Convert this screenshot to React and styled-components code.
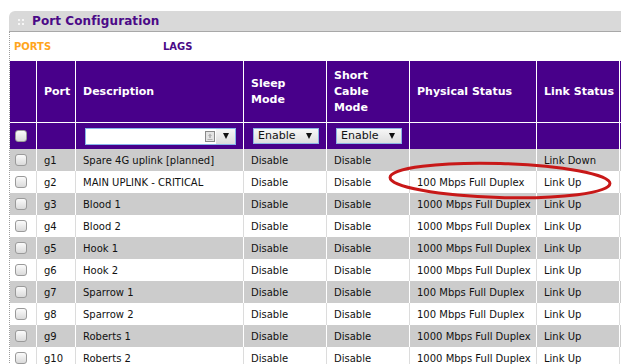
import React from 'react';
import styled, { createGlobalStyle } from 'styled-components';

const Global = createGlobalStyle`
  html, body { margin: 0; padding: 0; background: #fff; overflow: hidden; }
  body { font-family: "DejaVu Sans", Verdana, sans-serif; }
`;

const COLS = '26px 39px 168px 83px 83px 127px 83px 1fr';
const PURPLE = '#48008a';

const Page = styled.div`
  position: relative;
  box-sizing: border-box;
  width: 621px;
  height: 364px;
  overflow: hidden;
  padding: 11px 0 0 9px;
`;

const Panel = styled.section`
  width: 700px;
`;

const TitleBar = styled.header`
  display: flex;
  align-items: center;
  height: 20px;
  padding-left: 9px;
  background: #d9d9d9;
  border-bottom: 1px solid #a8a8a8;
  border-top-left-radius: 6px;
`;

const Grip = styled.span`
  display: grid;
  grid-template-columns: 2px 2px;
  grid-auto-rows: 2px;
  gap: 2px;
  margin: 2px 8px 0 0;
  span { background: #f6f6f6; }
`;

const Title = styled.h2`
  margin: 0;
  font-size: 12px;
  font-weight: bold;
  color: #4b0a87;
  letter-spacing: 0.1px;
`;

const Body = styled.div`
  border-left: 1px dotted #9c9c9c;
`;

const Tabs = styled.nav`
  display: grid;
  grid-template-columns: 149px 149px;
  align-items: center;
  height: 29px;
`;

const Tab = styled.span`
  padding-left: 4px;
  font-size: 10px;
  font-weight: bold;
  color: ${p => (p.$active ? '#ffa51c' : '#4b0a87')};
`;

const Grid = styled.div`
  width: 690px;
`;

const HeadRow = styled.div`
  display: grid;
  grid-template-columns: ${COLS};
  height: ${p => p.$h}px;
  background: ${PURPLE};
  border-bottom: ${p => (p.$line ? '1px solid #fff' : 'none')};
`;

const HeadCell = styled.div`
  display: flex;
  align-items: center;
  padding-left: ${p => p.$pad ?? 7}px;
  border-left: ${p => (p.$first ? 'none' : '1px solid #fff')};
  color: #fff;
  font-size: 11px;
  font-weight: bold;
  line-height: 16px;
`;

const Row = styled.div`
  display: grid;
  grid-template-columns: ${COLS};
  height: 22px;
  background: ${p => (p.$alt ? '#cccccc' : '#ffffff')};
`;

const Cell = styled.div`
  display: flex;
  align-items: center;
  padding-left: ${p => p.$pad ?? 7}px;
  border-left: ${p => (p.$first ? 'none' : p.$alt ? '1px solid #ffffff' : '1px solid #dcdcdc')};
  font-size: 10px;
  color: #111;
  white-space: nowrap;
  overflow: hidden;
`;

const Check = styled.span`
  display: block;
  width: 10px;
  height: 10px;
  border: 1px solid #9a9a9a;
  border-radius: 3px;
  background: linear-gradient(#fbfbfb, #dadada);
`;

const Combo = styled.div`
  display: flex;
  width: 151px;
  height: 17px;
  box-sizing: border-box;
  border: 1px solid #86b6ea;
  background: #fff;
`;

const ComboField = styled.span`
  flex: 1;
  display: flex;
  align-items: center;
  justify-content: flex-end;
  padding-right: 1px;
`;

const ComboButton = styled.span`
  display: flex;
  align-items: center;
  justify-content: center;
  width: 19px;
  background: linear-gradient(#f6f6f6, #dcdcdc);
`;

const Arrow = styled.span`
  display: block;
  width: 0;
  height: 0;
  border-left: 3px solid transparent;
  border-right: 3px solid transparent;
  border-top: 6px solid #111;
`;

const SelectBox = styled.div`
  display: flex;
  align-items: center;
  justify-content: space-between;
  width: 66px;
  height: 16px;
  box-sizing: border-box;
  padding: 0 6px 0 4px;
  border: 1px solid #8cb6e4;
  background: linear-gradient(#f7f7f7, #dedede);
  font-size: 11px;
  font-weight: normal;
  color: #111;
`;

const Overlay = styled.svg`
  position: absolute;
  left: 0;
  top: 0;
  width: 621px;
  height: 364px;
  pointer-events: none;
`;

const rows = [
  ['g1', 'Spare 4G uplink [planned]', '', 'Link Down'],
  ['g2', 'MAIN UPLINK - CRITICAL', '100 Mbps Full Duplex', 'Link Up'],
  ['g3', 'Blood 1', '1000 Mbps Full Duplex', 'Link Up'],
  ['g4', 'Blood 2', '1000 Mbps Full Duplex', 'Link Up'],
  ['g5', 'Hook 1', '1000 Mbps Full Duplex', 'Link Up'],
  ['g6', 'Hook 2', '1000 Mbps Full Duplex', 'Link Up'],
  ['g7', 'Sparrow 1', '100 Mbps Full Duplex', 'Link Up'],
  ['g8', 'Sparrow 2', '100 Mbps Full Duplex', 'Link Up'],
  ['g9', 'Roberts 1', '1000 Mbps Full Duplex', 'Link Up'],
  ['g10', 'Roberts 2', '1000 Mbps Full Duplex', 'Link Up'],
];

function Select() {
  return (
    <SelectBox>
      <span>Enable</span>
      <Arrow />
    </SelectBox>
  );
}

export default function App() {
  return (
    <>
      <Global />
      <Page>
        <Panel>
          <TitleBar>
            <Grip><span /><span /><span /><span /></Grip>
            <Title>Port Configuration</Title>
          </TitleBar>
          <Body>
            <Tabs>
              <Tab $active>PORTS</Tab>
              <Tab>LAGS</Tab>
            </Tabs>
            <Grid>
              <HeadRow $h={61} $line>
                <HeadCell $first />
                <HeadCell>Port</HeadCell>
                <HeadCell>Description</HeadCell>
                <HeadCell>Sleep<br />Mode</HeadCell>
                <HeadCell>Short<br />Cable<br />Mode</HeadCell>
                <HeadCell>Physical Status</HeadCell>
                <HeadCell>Link Status</HeadCell>
                <HeadCell />
              </HeadRow>
              <HeadRow $h={26}>
                <HeadCell $first $pad={5}><Check /></HeadCell>
                <HeadCell />
                <HeadCell $pad={9}>
                  <Combo>
                    <ComboField>
                      <svg width="10" height="11" viewBox="0 0 10 11">
                        <rect x="0.5" y="0.5" width="9" height="10" fill="#e4e4e4" stroke="#8a8a8a" />
                        <path d="M5 2.5 L3 5 H4.2 V7 H5.8 V5 H7 Z" fill="#b0b0b0" />
                        <rect x="2.5" y="8" width="5" height="1" fill="#b0b0b0" />
                      </svg>
                    </ComboField>
                    <ComboButton><Arrow /></ComboButton>
                  </Combo>
                </HeadCell>
                <HeadCell $pad={9}><Select /></HeadCell>
                <HeadCell $pad={9}><Select /></HeadCell>
                <HeadCell />
                <HeadCell />
                <HeadCell />
              </HeadRow>
              {rows.map(([port, desc, phys, link], i) => {
                const alt = i % 2 === 0;
                return (
                  <Row key={port} $alt={alt}>
                    <Cell $first $pad={5}><Check /></Cell>
                    <Cell $alt={alt}>{port}</Cell>
                    <Cell $alt={alt}>{desc}</Cell>
                    <Cell $alt={alt}>Disable</Cell>
                    <Cell $alt={alt}>Disable</Cell>
                    <Cell $alt={alt}>{phys}</Cell>
                    <Cell $alt={alt}>{link}</Cell>
                    <Cell $alt={alt} />
                  </Row>
                );
              })}
            </Grid>
          </Body>
        </Panel>
        <Overlay viewBox="0 0 621 364">
          <ellipse cx="500" cy="180.5" rx="110" ry="17" fill="none" stroke="#c81818" strokeWidth="3" transform="rotate(1.6 500 180.5)" />
        </Overlay>
      </Page>
    </>
  );
}
